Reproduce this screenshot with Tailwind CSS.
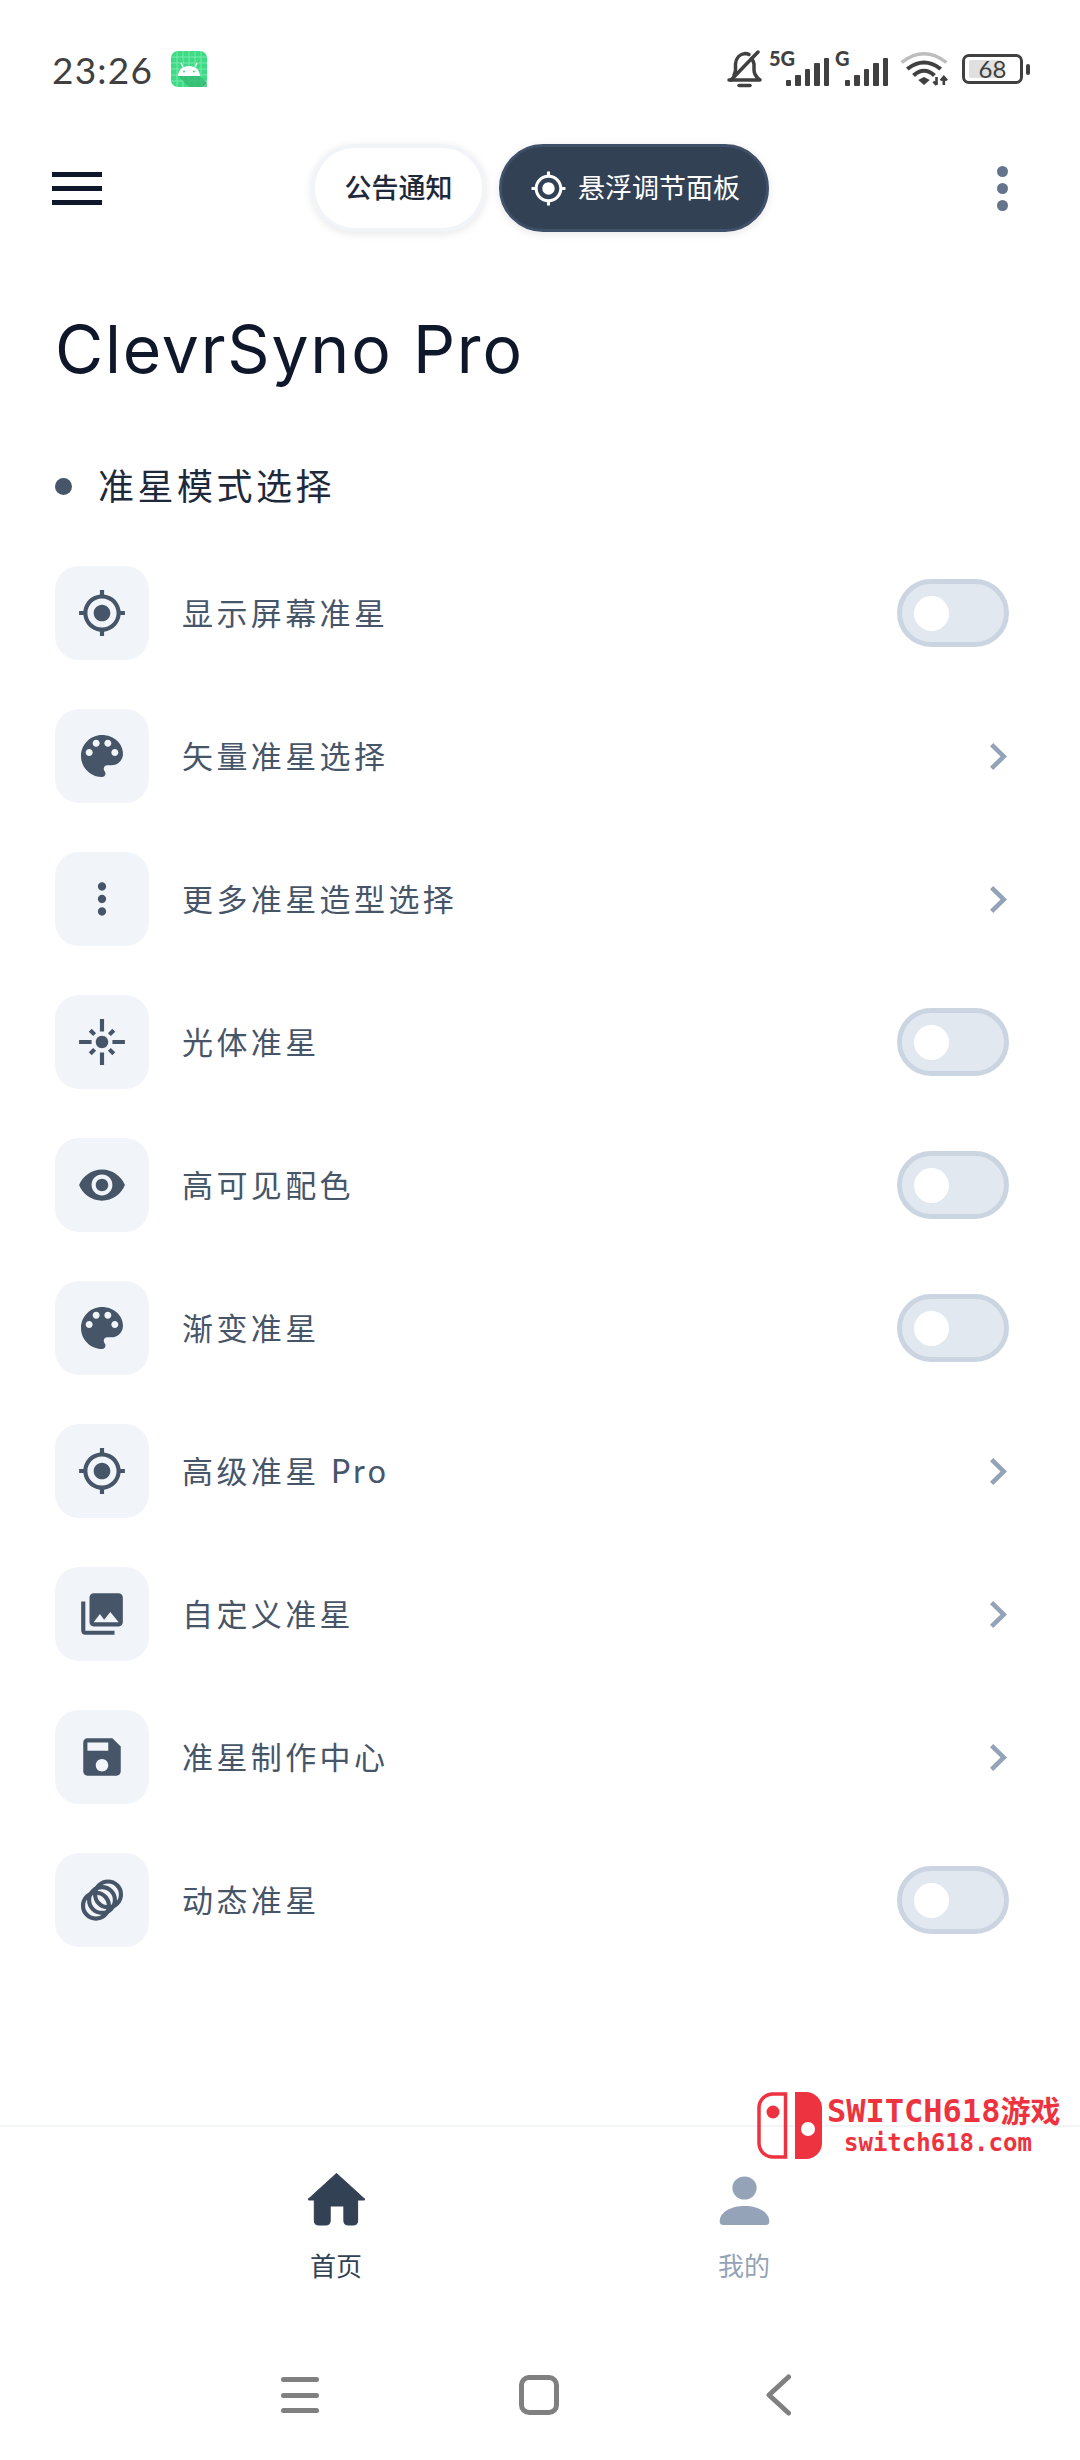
<!DOCTYPE html>
<html lang="zh-CN">
<head>
<meta charset="utf-8">
<meta name="viewport" content="width=device-width, initial-scale=1.0">
<title>ClevrSyno Pro</title>
<script src="https://cdn.jsdelivr.net/npm/@tailwindcss/browser@4"></script>
</head>
<body class="bg-white">
<div class="relative w-[1080px] h-[2460px] overflow-hidden bg-white font-['Lato','Noto_Sans_CJK_SC',sans-serif]">

  <!-- status bar -->
  <div class="h-[138px] flex items-center pl-[52px]">
    <span class="text-[37px] leading-none tracking-[1.200px] text-[#404040]">23:26</span>
    <svg class="ml-[18px] w-[36px] h-[36px]" viewBox="0 0 36 36">
      <rect width="36" height="36" rx="7" fill="#3ddc84"/>
      <path d="M6 0v36M12 0v36M18 0v36M24 0v36M30 0v36M0 6h36M0 12h36M0 18h36M0 24h36M0 30h36" stroke="#7ce8ac" stroke-width="1"/>
      <path d="M7 25h22l7 7v4H18z" fill="#2fb56c" opacity=".7"/>
      <path d="M7 25c0-6 5-10 11-10s11 4 11 10z" fill="#fff"/>
      <path d="M12 16l-2-4M24 16l2-4" stroke="#fff" stroke-width="1.200"/>
      <circle cx="13" cy="20.500" r="1" fill="#3ddc84"/><circle cx="23" cy="20.500" r="1" fill="#3ddc84"/>
    </svg>
    <div class="ml-auto mr-[50px] flex items-center">
      <svg class="w-[38px] h-[38px]" viewBox="0 0 36 38" fill="none" stroke="#404040" stroke-width="3.500" stroke-linecap="round" stroke-linejoin="round">
        <path d="M2 30h31c-4-3-6-6-6-10v-6c-.5-2-1-4-2.500-5.500M7 25c1-2 1.500-3.500 1.500-5v-6C9 8 13 4 18 3.500c1.500 0 3 .3 4 1"/>
        <path d="M4 30L31 2"/>
        <path d="M12 35.500h11" stroke-width="3.500"/>
      </svg>
      <div class="relative ml-[5px] w-[60px] h-[34px] flex items-end justify-end gap-[4px]">
        <span class="absolute left-0 top-[-4px] text-[20px] leading-[20px] font-black text-[#404040]">5G</span>
        <i class="w-[5.500px] h-[6px] rounded-[1px] bg-[#404040]"></i>
        <i class="w-[5.500px] h-[11px] rounded-[1px] bg-[#404040]"></i>
        <i class="w-[5.500px] h-[17px] rounded-[1px] bg-[#404040]"></i>
        <i class="w-[5.500px] h-[23px] rounded-[1px] bg-[#404040]"></i>
        <i class="w-[5.500px] h-[28px] rounded-[1px] bg-[#404040]"></i>
      </div>
      <div class="relative ml-[6px] w-[53px] h-[34px] flex items-end justify-end gap-[4px]">
        <span class="absolute left-0 top-[-4px] text-[20px] leading-[20px] font-black text-[#404040]">G</span>
        <i class="w-[5.500px] h-[6px] rounded-[1px] bg-[#404040]"></i>
        <i class="w-[5.500px] h-[11px] rounded-[1px] bg-[#404040]"></i>
        <i class="w-[5.500px] h-[17px] rounded-[1px] bg-[#404040]"></i>
        <i class="w-[5.500px] h-[23px] rounded-[1px] bg-[#404040]"></i>
        <i class="w-[5.500px] h-[28px] rounded-[1px] bg-[#404040]"></i>
      </div>
      <svg class="ml-[12px] w-[48px] h-[36px]" viewBox="0 0 46 36" preserveAspectRatio="none" fill="none">
        <path d="M1.500 11.500Q23-6 44.500 11.500" stroke="#bdbdbd" stroke-width="3.500"/>
        <path d="M7 18Q23 5 39 18" stroke="#404040" stroke-width="4"/>
        <path d="M13 24.500Q23 15 33 24.500" stroke="#404040" stroke-width="4"/>
        <path d="M17.500 29L23 26l5.500 3-5.500 5z" fill="#404040"/>
        <path d="M35 26v8M32 30.500l3 3.500M42 34v-8M39 29.500l3-3.500 3 3.500" stroke="#404040" stroke-width="2.500"/>
      </svg>
      <div class="relative ml-[14px] w-[61px] h-[30px] rounded-[7px] border-[3px] border-[#404040] flex items-center justify-center">
        <div class="absolute left-[4px] top-[3px] bottom-[3px] w-[33px] rounded-[2px] bg-[#e0e0e0]"></div>
        <span class="relative text-[24px] leading-none text-[#404040]">68</span>
      </div>
      <div class="ml-[3px] w-[4px] h-[11px] rounded-[2px] bg-[#404040]"></div>
    </div>
  </div>

  <!-- app bar -->
  <div class="mt-[6px] h-[88px] flex items-center pl-[52px] pr-[72px]">
    <div class="w-[50px] flex flex-col gap-[9px]">
      <div class="h-[5px] bg-[#0f172a]"></div>
      <div class="h-[5px] bg-[#0f172a]"></div>
      <div class="h-[5px] bg-[#0f172a]"></div>
    </div>
    <button class="ml-[209px] w-[175px] h-[88px] rounded-full bg-white border-[4px] border-[#f1f5f9] shadow-[0_2px_8px_rgba(15,23,42,0.1)] flex items-center justify-center text-[27px] font-medium text-[#1e293b]">公告通知</button>
    <button class="ml-[13px] w-[270px] h-[88px] rounded-full bg-[#334155] border-[3px] border-[#3f5069] shadow-[0_2px_8px_rgba(15,23,42,0.1)] flex items-center pl-[28px] gap-[11px] text-[27px] text-white">
      <svg class="w-[37px] h-[37px]" viewBox="0 0 24 24" fill="#fff"><path d="M12 8c-2.210 0-4 1.790-4 4s1.790 4 4 4 4-1.790 4-4-1.790-4-4-4zm8.940 3c-.46-4.170-3.770-7.480-7.940-7.940V1h-2v2.060C6.830 3.520 3.520 6.830 3.060 11H1v2h2.060c.46 4.170 3.770 7.480 7.940 7.940V23h2v-2.060c4.170-.46 7.480-3.770 7.940-7.940H23v-2h-2.060zM12 19c-3.870 0-7-3.130-7-7s3.130-7 7-7 7 3.130 7 7-3.130 7-7 7z"/></svg>
      悬浮调节面板
    </button>
    <div class="ml-auto flex flex-col gap-[6px]">
      <div class="size-[11px] rounded-full bg-[#64748b]"></div>
      <div class="size-[11px] rounded-full bg-[#64748b]"></div>
      <div class="size-[11px] rounded-full bg-[#64748b]"></div>
    </div>
  </div>

  <h1 class="mt-[67px] h-[100px] pl-[55px] flex items-center font-['Inter',sans-serif] text-[66px] leading-none font-normal tracking-[1.800px] text-[#0f172a]">ClevrSyno Pro</h1>

  <div class="mt-[65px] h-[44px] pl-[55px] flex items-center gap-[26px]">
    <div class="size-[17px] rounded-full bg-[#475569]"></div>
    <h2 class="text-[36px] leading-none tracking-[3.500px] text-[#1e293b]">准星模式选择</h2>
  </div>

  <!-- crosshair options -->
  <div class="mt-[58px] flex flex-col gap-[49px] pl-[55px] pr-[71px] text-[31px] leading-none tracking-[3.400px] text-[#475569]">

    <div class="h-[94px] flex items-center">
      <div class="size-[94px] rounded-[24px] bg-[#f1f5f9] flex items-center justify-center">
        <svg class="size-[50px]" viewBox="0 0 24 24" fill="#475569"><path d="M12 8c-2.210 0-4 1.790-4 4s1.790 4 4 4 4-1.790 4-4-1.790-4-4-4zm8.940 3c-.46-4.170-3.770-7.480-7.940-7.940V1h-2v2.060C6.830 3.520 3.520 6.830 3.060 11H1v2h2.060c.46 4.170 3.770 7.480 7.940 7.940V23h2v-2.060c4.170-.46 7.480-3.770 7.940-7.940H23v-2h-2.060zM12 19c-3.870 0-7-3.130-7-7s3.130-7 7-7 7 3.130 7 7-3.130 7-7 7z"/></svg>
      </div>
      <span class="ml-[33px]">显示屏幕准星</span>
      <div class="ml-auto w-[112px] h-[68px] rounded-full border-[5px] border-[#cbd5e1] bg-[#e2e8f0] flex items-center pl-[12px]"><div class="size-[35px] rounded-full bg-white"></div></div>
    </div>

    <div class="h-[94px] flex items-center">
      <div class="size-[94px] rounded-[24px] bg-[#f1f5f9] flex items-center justify-center">
        <svg class="size-[56px]" viewBox="0 0 24 24" fill="#475569"><path d="M12 3c-4.970 0-9 4.030-9 9s4.030 9 9 9c.83 0 1.500-.67 1.500-1.500 0-.39-.15-.74-.39-1.010-.23-.26-.38-.61-.38-.99 0-.83.67-1.500 1.500-1.500H16c2.760 0 5-2.240 5-5 0-4.420-4.030-8-9-8zm-5.500 9c-.83 0-1.500-.67-1.500-1.500S5.670 9 6.500 9 8 9.670 8 10.500 7.330 12 6.500 12zm3-4C8.670 8 8 7.330 8 6.500S8.670 5 9.500 5s1.500.67 1.500 1.500S10.330 8 9.500 8zm5 0c-.83 0-1.500-.67-1.500-1.500S13.670 5 14.500 5s1.500.67 1.500 1.500S15.330 8 14.500 8zm3 4c-.83 0-1.500-.67-1.500-1.500S16.670 9 17.500 9s1.500.67 1.500 1.500-.67 1.500-1.500 1.500z"/></svg>
      </div>
      <span class="ml-[33px]">矢量准星选择</span>
      <svg class="ml-auto mr-[2px] w-[17px] h-[27px]" viewBox="8.590 6 7.410 12" preserveAspectRatio="none" fill="#94a3b8"><path d="M10 6L8.590 7.410 13.170 12l-4.580 4.590L10 18l6-6z"/></svg>
    </div>

    <div class="h-[94px] flex items-center">
      <div class="size-[94px] rounded-[24px] bg-[#f1f5f9] flex items-center justify-center">
        <svg class="size-[50px]" viewBox="0 0 24 24" fill="#475569"><path d="M12 8c1.100 0 2-.9 2-2s-.9-2-2-2-2 .9-2 2 .9 2 2 2zm0 2c-1.100 0-2 .9-2 2s.9 2 2 2 2-.9 2-2-.9-2-2-2zm0 6c-1.100 0-2 .9-2 2s.9 2 2 2 2-.9 2-2-.9-2-2-2z"/></svg>
      </div>
      <span class="ml-[33px]">更多准星造型选择</span>
      <svg class="ml-auto mr-[2px] w-[17px] h-[27px]" viewBox="8.590 6 7.410 12" preserveAspectRatio="none" fill="#94a3b8"><path d="M10 6L8.590 7.410 13.170 12l-4.580 4.590L10 18l6-6z"/></svg>
    </div>

    <div class="h-[94px] flex items-center">
      <div class="size-[94px] rounded-[24px] bg-[#f1f5f9] flex items-center justify-center">
        <svg class="size-[50px]" viewBox="0 0 24 24" fill="#475569"><path d="M7 11H1v2h6v-2zm2.170-3.240L7.050 5.640 5.640 7.050l2.120 2.120 1.410-1.410zM13 1h-2v6h2V1zm5.360 6.050l-1.410-1.410-2.120 2.120 1.410 1.410 2.120-2.120zM17 11v2h6v-2h-6zm-5-2c-1.660 0-3 1.340-3 3s1.340 3 3 3 3-1.340 3-3-1.340-3-3-3zm2.830 7.240l2.120 2.120 1.410-1.410-2.120-2.120-1.410 1.410zm-9.190.71l1.410 1.410 2.120-2.120-1.410-1.410-2.120 2.120zM11 23h2v-6h-2v6z"/></svg>
      </div>
      <span class="ml-[33px]">光体准星</span>
      <div class="ml-auto w-[112px] h-[68px] rounded-full border-[5px] border-[#cbd5e1] bg-[#e2e8f0] flex items-center pl-[12px]"><div class="size-[35px] rounded-full bg-white"></div></div>
    </div>

    <div class="h-[94px] flex items-center">
      <div class="size-[94px] rounded-[24px] bg-[#f1f5f9] flex items-center justify-center">
        <svg class="size-[50px]" viewBox="0 0 24 24" fill="#475569"><path d="M12 4.500C7 4.500 2.730 7.610 1 12c1.730 4.390 6 7.500 11 7.500s9.270-3.110 11-7.500c-1.730-4.390-6-7.500-11-7.500zM12 17c-2.760 0-5-2.240-5-5s2.240-5 5-5 5 2.240 5 5-2.240 5-5 5zm0-8c-1.660 0-3 1.340-3 3s1.340 3 3 3 3-1.340 3-3-1.340-3-3-3z"/></svg>
      </div>
      <span class="ml-[33px]">高可见配色</span>
      <div class="ml-auto w-[112px] h-[68px] rounded-full border-[5px] border-[#cbd5e1] bg-[#e2e8f0] flex items-center pl-[12px]"><div class="size-[35px] rounded-full bg-white"></div></div>
    </div>

    <div class="h-[94px] flex items-center">
      <div class="size-[94px] rounded-[24px] bg-[#f1f5f9] flex items-center justify-center">
        <svg class="size-[56px]" viewBox="0 0 24 24" fill="#475569"><path d="M12 3c-4.970 0-9 4.030-9 9s4.030 9 9 9c.83 0 1.500-.67 1.500-1.500 0-.39-.15-.74-.39-1.010-.23-.26-.38-.61-.38-.99 0-.83.67-1.500 1.500-1.500H16c2.760 0 5-2.240 5-5 0-4.420-4.030-8-9-8zm-5.500 9c-.83 0-1.500-.67-1.500-1.500S5.670 9 6.500 9 8 9.670 8 10.500 7.330 12 6.500 12zm3-4C8.670 8 8 7.330 8 6.500S8.670 5 9.500 5s1.500.67 1.500 1.500S10.330 8 9.500 8zm5 0c-.83 0-1.500-.67-1.500-1.500S13.670 5 14.500 5s1.500.67 1.500 1.500S15.330 8 14.500 8zm3 4c-.83 0-1.500-.67-1.500-1.500S16.670 9 17.500 9s1.500.67 1.500 1.500-.67 1.500-1.500 1.500z"/></svg>
      </div>
      <span class="ml-[33px]">渐变准星</span>
      <div class="ml-auto w-[112px] h-[68px] rounded-full border-[5px] border-[#cbd5e1] bg-[#e2e8f0] flex items-center pl-[12px]"><div class="size-[35px] rounded-full bg-white"></div></div>
    </div>

    <div class="h-[94px] flex items-center">
      <div class="size-[94px] rounded-[24px] bg-[#f1f5f9] flex items-center justify-center">
        <svg class="size-[50px]" viewBox="0 0 24 24" fill="#475569"><path d="M12 8c-2.210 0-4 1.790-4 4s1.790 4 4 4 4-1.790 4-4-1.790-4-4-4zm8.940 3c-.46-4.170-3.770-7.480-7.940-7.940V1h-2v2.060C6.830 3.520 3.520 6.830 3.060 11H1v2h2.060c.46 4.170 3.770 7.480 7.940 7.940V23h2v-2.060c4.170-.46 7.480-3.770 7.940-7.940H23v-2h-2.060zM12 19c-3.870 0-7-3.130-7-7s3.130-7 7-7 7 3.130 7 7-3.130 7-7 7z"/></svg>
      </div>
      <span class="ml-[33px]">高级准星 <span class="text-[32px]">Pro</span></span>
      <svg class="ml-auto mr-[2px] w-[17px] h-[27px]" viewBox="8.590 6 7.410 12" preserveAspectRatio="none" fill="#94a3b8"><path d="M10 6L8.590 7.410 13.170 12l-4.580 4.590L10 18l6-6z"/></svg>
    </div>

    <div class="h-[94px] flex items-center">
      <div class="size-[94px] rounded-[24px] bg-[#f1f5f9] flex items-center justify-center">
        <svg class="size-[50px]" viewBox="0 0 24 24" fill="#475569"><path d="M22 16V4c0-1.100-.9-2-2-2H8c-1.100 0-2 .9-2 2v12c0 1.100.9 2 2 2h12c1.100 0 2-.9 2-2zm-11-4l2.030 2.710L16 11l4 5H8l3-4zM2 6v14c0 1.100.9 2 2 2h14v-2H4V6H2z"/></svg>
      </div>
      <span class="ml-[33px]">自定义准星</span>
      <svg class="ml-auto mr-[2px] w-[17px] h-[27px]" viewBox="8.590 6 7.410 12" preserveAspectRatio="none" fill="#94a3b8"><path d="M10 6L8.590 7.410 13.170 12l-4.580 4.590L10 18l6-6z"/></svg>
    </div>

    <div class="h-[94px] flex items-center">
      <div class="size-[94px] rounded-[24px] bg-[#f1f5f9] flex items-center justify-center">
        <svg class="size-[50px]" viewBox="0 0 24 24" fill="#475569"><path d="M17 3H5c-1.110 0-2 .9-2 2v14c0 1.100.89 2 2 2h14c1.100 0 2-.9 2-2V7l-4-4zm-5 16c-1.660 0-3-1.340-3-3s1.340-3 3-3 3 1.340 3 3-1.340 3-3 3zm3-10H5V5h10v4z"/></svg>
      </div>
      <span class="ml-[33px]">准星制作中心</span>
      <svg class="ml-auto mr-[2px] w-[17px] h-[27px]" viewBox="8.590 6 7.410 12" preserveAspectRatio="none" fill="#94a3b8"><path d="M10 6L8.590 7.410 13.170 12l-4.580 4.590L10 18l6-6z"/></svg>
    </div>

    <div class="h-[94px] flex items-center">
      <div class="size-[94px] rounded-[24px] bg-[#f1f5f9] flex items-center justify-center">
        <svg class="size-[50px]" viewBox="0 0 24 24" fill="none" stroke="#475569" stroke-width="2"><circle cx="9.100" cy="14.700" r="6.200"/><circle cx="12" cy="12" r="6.200"/><circle cx="14.900" cy="9.300" r="6.200"/></svg>
      </div>
      <span class="ml-[33px]">动态准星</span>
      <div class="ml-auto w-[112px] h-[68px] rounded-full border-[5px] border-[#cbd5e1] bg-[#e2e8f0] flex items-center pl-[12px]"><div class="size-[35px] rounded-full bg-white"></div></div>
    </div>
  </div>

  <!-- tab bar -->
  <div class="mt-[178px] h-[210px] border-t-[2px] border-[#f1f5f9] flex pl-[281px] pt-[45px] gap-[298px]">
    <div class="w-[110px] flex flex-col items-center text-[#334155]">
      <svg class="w-[57px] h-[54px]" viewBox="0 0 54 54" preserveAspectRatio="none" fill="#334155"><path d="M27 1.500L53 26.500a.8.8 0 0 1-.6 1.500H47V49a4 4 0 0 1-4 4H38a4 4 0 0 1-4-4V34H21V49a4 4 0 0 1-4 4H10a4 4 0 0 1-4-4V28H1.600a.8.8 0 0 1-.6-1.500z" stroke="#334155" stroke-linejoin="round"/></svg>
      <span class="mt-[24px] text-[26px] leading-[32px]">首页</span>
    </div>
    <div class="w-[110px] flex flex-col items-center text-[#94a3b8]">
      <svg class="w-[57px] h-[54px]" viewBox="0 0 54 54" preserveAspectRatio="none" fill="#94a3b8"><circle cx="27" cy="16" r="11.500"/><path d="M3.500 49.500C3.500 40 14 34 27 34s23.500 6 23.500 15.500a3.500 3.500 0 0 1-3.500 3.500H7a3.500 3.500 0 0 1-3.500-3.500z"/></svg>
      <span class="mt-[24px] text-[26px] leading-[32px]">我的</span>
    </div>
  </div>

  <!-- system navigation -->
  <div class="h-[120px] flex items-center pl-[281px]">
    <div class="w-[38px] flex flex-col gap-[10.500px]">
      <div class="h-[5px] rounded-full bg-[#808080]"></div>
      <div class="h-[5px] rounded-full bg-[#808080]"></div>
      <div class="h-[5px] rounded-full bg-[#808080]"></div>
    </div>
    <div class="ml-[200px] w-[40px] h-[40px] rounded-[10px] border-[5px] border-[#808080]"></div>
    <svg class="ml-[207px] w-[25px] h-[42px]" viewBox="0 0 25 42" fill="none" stroke="#808080" stroke-width="5" stroke-linecap="round" stroke-linejoin="round"><path d="M22.500 3L3 21l19.500 18"/></svg>
  </div>

  <!-- watermark over the tab bar -->
  <div class="absolute left-[757px] top-[2092px] flex text-[#ee3340]">
    <svg class="w-[66px] h-[67px]" viewBox="0 0 66 67"><path d="M28.500 2H16A14 14 0 0 0 2 16v35a14 14 0 0 0 14 14h12.500z" fill="none" stroke="#ee3340" stroke-width="3.500"/><circle cx="16" cy="20" r="6.500" fill="#ee3340"/><path d="M38 0h11a16 16 0 0 1 16 16v35a16 16 0 0 1-16 16H38z" fill="#ee3340"/><circle cx="51" cy="37" r="7" fill="#fff"/></svg>
    <div class="relative font-['DejaVu_Sans_Mono','Noto_Sans_CJK_SC',monospace] font-bold whitespace-nowrap">
      <div class="ml-[4px] mt-[1px] text-[32px] leading-[36px]">SWITCH618<span class="text-[30px]">游戏</span></div>
      <div class="ml-[21px] mt-[-1px] text-[24px] leading-[28px]">switch618.com</div>
    </div>
  </div>
</div>
</body>
</html>
